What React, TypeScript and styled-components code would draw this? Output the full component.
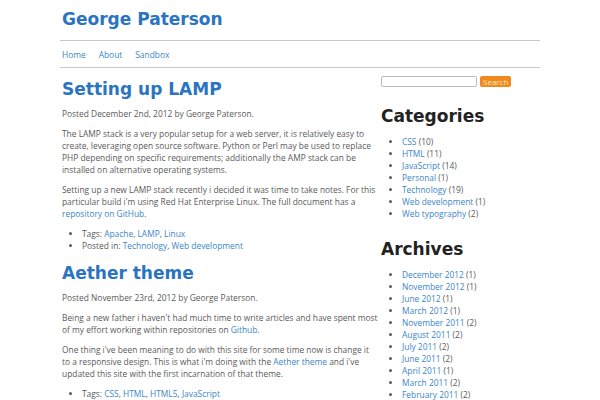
import * as React from "react";
import styled, { createGlobalStyle } from "styled-components";

const GlobalStyle = createGlobalStyle`
  body {
    margin: 0;
    background: #fff;
    font-family: "Open Sans", "DejaVu Sans", sans-serif;
    color: #5a5a5a;
  }
  a {
    color: #3a86c8;
    text-decoration: none;
  }
`;

const Page = styled.div`
  width: 480px;
  margin: 0 auto;
`;

const SiteTitle = styled.h1`
  margin: 0;
  padding: 9px 2px 0;
  height: 31px;
  font-family: "DejaVu Sans", sans-serif;
  font-size: 17px;
  font-weight: bold;
  color: #2a74c2;
`;

const Nav = styled.nav`
  display: flex;
  gap: 13px;
  border-top: 1px solid #c8c8c8;
  border-bottom: 1px solid #c8c8c8;
  height: 26px;
  align-items: center;
  padding: 0 2px;
  font-size: 8.4px;
`;

const Layout = styled.div`
  display: grid;
  grid-template-columns: 316px 1fr;
  gap: 3px;
  padding: 0 2px;
`;

const Main = styled.main``;

const PostTitle = styled.h2`
  margin: 10px 0 0;
  font-family: "DejaVu Sans", sans-serif;
  font-size: 17px;
  font-weight: bold;
  color: #2a74c2;
  line-height: 22px;
`;

const Text = styled.p`
  margin: 8px 0 0;
  font-size: 8.4px;
  line-height: 12px;
`;

const Meta = styled.ul`
  margin: 8px 0 0;
  padding-left: 20px;
  font-size: 8.4px;
  line-height: 12px;
`;

const Sidebar = styled.aside`
  padding-top: 8px;
`;

const SearchRow = styled.form`
  display: flex;
  gap: 3px;
  align-items: center;
`;

const SearchInput = styled.input`
  width: 96px;
  height: 11px;
  box-sizing: border-box;
  border: 1px solid #bbb;
  border-radius: 2px;
  padding: 0;
`;

const SearchButton = styled.button`
  height: 11px;
  padding: 0 3px;
  border: none;
  border-radius: 2px;
  background: #f08a1c;
  color: #fde6c8;
  font-family: "Open Sans", sans-serif;
  font-size: 8px;
  line-height: 11px;
`;

const WidgetTitle = styled.h3`
  margin: 18px 0 0;
  font-family: "DejaVu Sans", sans-serif;
  font-size: 17px;
  font-weight: bold;
  color: #222;
  line-height: 22px;
`;

const WidgetList = styled.ul`
  margin: 9px 0 0;
  padding-left: 21px;
  font-size: 8.4px;
  line-height: 12px;
`;

type Count = [string, number];

const categories: Count[] = [
  ["CSS", 10],
  ["HTML", 11],
  ["JavaScript", 14],
  ["Personal", 1],
  ["Technology", 19],
  ["Web development", 1],
  ["Web typography", 2],
];

const archives: Count[] = [
  ["December 2012", 1],
  ["November 2012", 1],
  ["June 2012", 1],
  ["March 2012", 1],
  ["November 2011", 2],
  ["August 2011", 2],
  ["July 2011", 2],
  ["June 2011", 2],
  ["April 2011", 1],
  ["March 2011", 2],
  ["February 2011", 2],
];

const Links = ({ items }: { items: string[] }) => (
  <>
    {items.map((t, i) => (
      <React.Fragment key={t}>
        {i > 0 && ", "}
        <a href="#">{t}</a>
      </React.Fragment>
    ))}
  </>
);

export default function App(): React.ReactElement {
  return (
    <Page>
      <GlobalStyle />
      <SiteTitle>George Paterson</SiteTitle>
      <Nav>
        <a href="#">Home</a>
        <a href="#">About</a>
        <a href="#">Sandbox</a>
      </Nav>
      <Layout>
        <Main>
          <PostTitle>Setting up LAMP</PostTitle>
          <Text>Posted December 2nd, 2012 by George Paterson.</Text>
          <Text>
            The LAMP stack is a very popular setup for a web server, it is relatively easy to
            create, leveraging open source software. Python or Perl may be used to replace PHP
            depending on specific requirements; additionally the AMP stack can be installed on
            alternative operating systems.
          </Text>
          <Text>
            Setting up a new LAMP stack recently i decided it was time to take notes. For this
            particular build i'm using Red Hat Enterprise Linux. The full document has a{" "}
            <a href="#">repository on GitHub</a>.
          </Text>
          <Meta>
            <li>
              Tags: <Links items={["Apache", "LAMP", "Linux"]} />
            </li>
            <li>
              Posted in: <Links items={["Technology", "Web development"]} />
            </li>
          </Meta>

          <PostTitle>Aether theme</PostTitle>
          <Text>Posted November 23rd, 2012 by George Paterson.</Text>
          <Text>
            Being a new father i haven't had much time to write articles and have spent most of
            my effort working within repositories on <a href="#">Github</a>.
          </Text>
          <Text>
            One thing i've been meaning to do with this site for some time now is change it to a
            responsive design. This is what i'm doing with the <a href="#">Aether theme</a> and
            i've updated this site with the first incarnation of that theme.
          </Text>
          <Meta>
            <li>
              Tags: <Links items={["CSS", "HTML", "HTML5", "JavaScript"]} />
            </li>
          </Meta>
        </Main>
        <Sidebar>
          <SearchRow onSubmit={(e) => e.preventDefault()}>
            <SearchInput type="text" />
            <SearchButton type="submit">Search</SearchButton>
          </SearchRow>
          <WidgetTitle>Categories</WidgetTitle>
          <WidgetList>
            {categories.map(([name, n]) => (
              <li key={name}>
                <a href="#">{name}</a> ({n})
              </li>
            ))}
          </WidgetList>
          <WidgetTitle>Archives</WidgetTitle>
          <WidgetList>
            {archives.map(([name, n]) => (
              <li key={name}>
                <a href="#">{name}</a> ({n})
              </li>
            ))}
          </WidgetList>
        </Sidebar>
      </Layout>
    </Page>
  );
}
